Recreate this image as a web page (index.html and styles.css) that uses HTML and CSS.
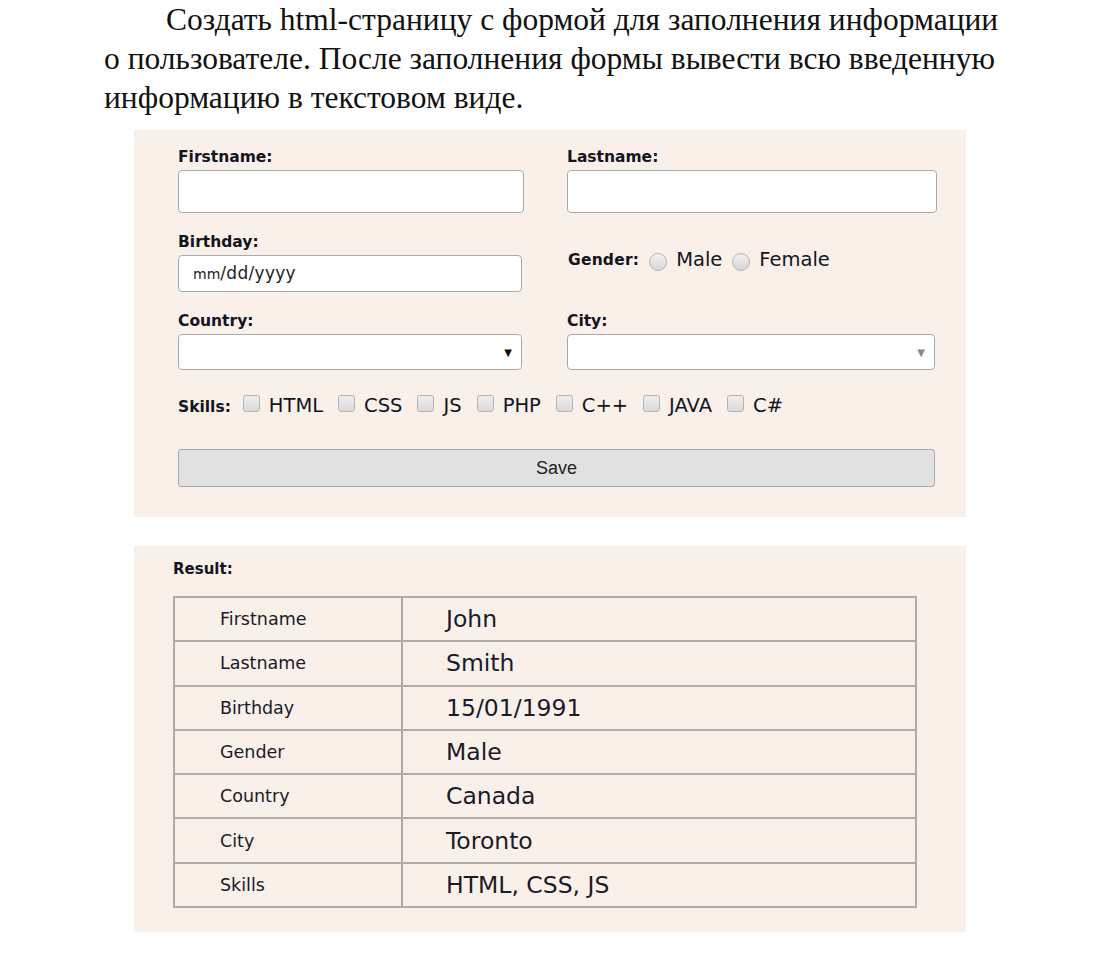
FILE: index.html
```html
<!DOCTYPE html>
<html lang="ru">
<head>
<meta charset="utf-8">
<title>Форма пользователя</title>
<link rel="stylesheet" href="styles.css">
</head>
<body>
<div class="page">
  <p class="task">Создать html-страницу с формой для заполнения информации<br>о пользователе. После заполнения формы вывести всю введенную<br>информацию в текстовом виде.</p>

  <section class="panel form-panel">
    <div class="form-grid">
      <div class="field">
        <div class="label">Firstname:</div>
        <div class="input tall"></div>
      </div>
      <div class="field">
        <div class="label">Lastname:</div>
        <div class="input tall"></div>
      </div>
      <div class="field narrow">
        <div class="label">Birthday:</div>
        <div class="input date"><span class="mm">mm</span>/dd/yyyy</div>
      </div>
      <div class="field gender">
        <span class="label">Gender:</span>
        <span class="radio"></span><span class="opt">Male</span>
        <span class="radio"></span><span class="opt">Female</span>
      </div>
      <div class="field narrow">
        <div class="label">Country:</div>
        <div class="input select"><span class="arrow">&#9660;</span></div>
      </div>
      <div class="field narrow-r">
        <div class="label">City:</div>
        <div class="input select"><span class="arrow dim">&#9660;</span></div>
      </div>
    </div>
    <div class="skills">
      <span class="label">Skills:</span>
      <span class="check"></span><span class="opt">HTML</span>
      <span class="check"></span><span class="opt">CSS</span>
      <span class="check"></span><span class="opt">JS</span>
      <span class="check"></span><span class="opt">PHP</span>
      <span class="check"></span><span class="opt">C++</span>
      <span class="check"></span><span class="opt">JAVA</span>
      <span class="check"></span><span class="opt">C#</span>
    </div>
    <div class="button">Save</div>
  </section>

  <section class="panel result-panel">
    <div class="label result-label">Result:</div>
    <table class="result">
      <tr><td class="k">Firstname</td><td class="v">John</td></tr>
      <tr><td class="k">Lastname</td><td class="v">Smith</td></tr>
      <tr><td class="k">Birthday</td><td class="v">15/01/1991</td></tr>
      <tr><td class="k">Gender</td><td class="v">Male</td></tr>
      <tr><td class="k">Country</td><td class="v">Canada</td></tr>
      <tr><td class="k">City</td><td class="v">Toronto</td></tr>
      <tr><td class="k">Skills</td><td class="v">HTML, CSS, JS</td></tr>
    </table>
  </section>
</div>
</body>
</html>
```

FILE: styles.css
```css
* { box-sizing: border-box; }
html, body { margin: 0; padding: 0; background: #fff; }
body { font-family: "DejaVu Sans", sans-serif; color: #14141e; }

.task {
  margin: 0 0 0 104px;
  font-family: "Liberation Serif", "DejaVu Serif", serif;
  font-size: 31.5px;
  line-height: 39px;
  text-indent: 62px;
  color: #111;
  white-space: nowrap;
}

.panel {
  margin-left: 134px;
  width: 832px;
  background: #f9f0ea;
}

.form-panel {
  margin-top: 13px;
  padding: 17px 31px 30px 44px;
}

.form-grid {
  display: grid;
  grid-template-columns: 346px 370px;
  column-gap: 43px;
  row-gap: 19px;
}

.label {
  font-weight: bold;
  font-size: 15.5px;
  line-height: 20px;
  color: #14141e;
}

.field .label { margin-bottom: 3px; }

.input {
  background: #fff;
  border: 1px solid #a9a9a9;
  border-radius: 4px;
}
.input.tall { height: 43px; }
.field.narrow .input { width: 344px; }
.field.narrow-r .input { width: 368px; }

.input.date {
  height: 37px;
  padding-left: 14px;
  font-size: 17px;
  line-height: 35px;
  color: #222;
  letter-spacing: 0.3px;
}
.input.date .mm { font-size: 14px; letter-spacing: 0; }

.input.select {
  height: 36px;
  display: flex;
  justify-content: flex-end;
  align-items: center;
  padding-right: 9px;
}
.arrow { font-size: 10px; color: #111; }
.arrow.dim { color: #888; }

.field.gender {
  display: flex;
  align-items: center;
  align-self: center;
  padding-bottom: 4px;
}
.field.gender .label { margin: 0 9px 0 1px; letter-spacing: 0.2px; }

.opt {
  font-size: 19.5px;
  line-height: 24px;
  color: #14141e;
}

.radio {
  width: 18px;
  height: 18px;
  border-radius: 50%;
  border: 1px solid #b4b4b4;
  background: linear-gradient(#f2f2f2, #d6d6d6);
  margin: 4px 9px 0 1px;
  flex: none;
}
.field.gender .opt + .radio { margin-left: 10px; }

.skills {
  display: flex;
  align-items: center;
  margin-top: 24px;
  height: 24px;
}
.skills .label { margin-right: 12px; padding-top: 2px; }

.check {
  width: 17px;
  height: 17px;
  border-radius: 3px;
  border: 1px solid #b4b4b4;
  background: linear-gradient(#eeeeee, #dadada);
  margin: 0 9px 6px 0;
  flex: none;
}
.skills .opt { margin-right: 15px; font-size: 19.5px; }

.button {
  margin-top: 31px;
  width: 757px;
  height: 38px;
  background: #e1e1e1;
  border: 1px solid #a8a8a8;
  border-radius: 3px;
  font-family: "Liberation Sans", Arial, sans-serif;
  font-size: 18px;
  line-height: 36px;
  text-align: center;
  color: #222;
}

.result-panel {
  margin-top: 29px;
  padding: 14px 0 24px 39px;
}
.result-label { font-size: 15px; line-height: 18px; }

.result {
  margin-top: 18px;
  width: 744px;
  border-collapse: collapse;
}
.result td {
  border: 2px solid #b0aba7;
  height: 44.3px;
  padding: 0;
  vertical-align: middle;
}
.result td.k {
  width: 228px;
  padding-left: 45px;
  font-size: 17.5px;
  color: #1a1a28;
}
.result td.v {
  padding-left: 43px;
  font-size: 23.5px;
  color: #1a1a28;
}
```
